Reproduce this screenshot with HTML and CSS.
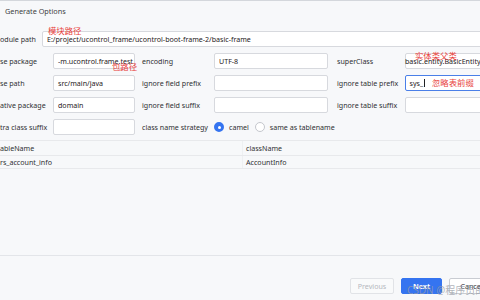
FILE: index.html
```html
<!DOCTYPE html>
<html>
<head>
<meta charset="utf-8">
<link rel="stylesheet" href="styles.css">
</head>
<body>
<div class="dialog">
  <div class="titlebar">Generate Options</div>
  <div class="module-row">
    <span class="label mod-label">odule path</span>
    <div class="field wide"><span class="val">E:/project/ucontrol_frame/ucontrol-boot-frame-2/basic-frame</span><span class="note note-module">模块路径</span></div>
  </div>
  <div class="form">
    <span class="label">se package</span>
    <div class="field"><span class="val">-m.ucontrol.frame.test</span><span class="note note-pkg">包路径</span></div>
    <span class="label c3">encoding</span>
    <div class="field"><span class="val">UTF-8</span></div>
    <span class="label c5">superClass</span>
    <div class="field"><span class="val shift">basic.entity.BasicEntity</span><span class="note note-super">实体类父类</span></div>

    <span class="label">se path</span>
    <div class="field"><span class="val">src/main/java</span></div>
    <span class="label c3">ignore field prefix</span>
    <div class="field"></div>
    <span class="label c5">ignore table prefix</span>
    <div class="field focus"><span class="val">sys_</span><span class="caret"></span><span class="note note-prefix">忽略表前缀</span></div>

    <span class="label">ative package</span>
    <div class="field"><span class="val">domain</span></div>
    <span class="label c3">ignore field suffix</span>
    <div class="field"></div>
    <span class="label c5">ignore table suffix</span>
    <div class="field"></div>

    <span class="label">tra class suffix</span>
    <div class="field"></div>
    <span class="label c3">class name strategy</span>
    <div class="radios">
      <span class="radio on"></span><span class="rtext">camel</span>
      <span class="radio off"></span><span class="rtext">same as tablename</span>
    </div>
  </div>
  <div class="table">
    <div class="trow head"><span class="cell c-left">ableName</span><span class="cell c-right">className</span></div>
    <div class="trow"><span class="cell c-left">rs_account_info</span><span class="cell c-right">AccountInfo</span></div>
  </div>
  <div class="footer">
    <span class="btn disabled">Previous</span>
    <span class="btn primary">Next</span>
    <span class="btn">Cancel</span>
    <span class="watermark">CSDN @程序员的宝库</span>
  </div>
</div>
</body>
</html>
```
FILE: styles.css
```css
html, body {
  margin: 0;
  padding: 0;
  width: 480px;
  height: 300px;
  overflow: hidden;
  background: #f7f8fa;
}
.dialog {
  width: 480px;
  height: 300px;
  box-sizing: border-box;
  border-top: 1px solid #d4d7dc;
  display: flex;
  flex-direction: column;
  font-family: "Noto Sans", "Open Sans", sans-serif;
  font-size: 7.1px;
  color: #2f3033;
  background: #f7f8fa;
  overflow: hidden;
}
.titlebar {
  height: 21px;
  line-height: 21px;
  padding-left: 5px;
  color: #3d3f43;
  font-size: 7.3px;
  flex: none;
}
.module-row {
  display: flex;
  align-items: center;
  margin-top: 9px;
  height: 16px;
  flex: none;
}
.mod-label {
  width: 42px;
  flex: none;
}
.label {
  white-space: nowrap;
  display: flex;
  align-items: center;
  height: 16px;
}
.field {
  position: relative;
  height: 16px;
  box-sizing: border-box;
  background: #ffffff;
  border: 1px solid #d7d9de;
  border-radius: 2px;
  display: flex;
  align-items: center;
  padding-left: 4px;
  white-space: nowrap;
  color: #1f2023;
}
.field.wide {
  width: 460px;
  flex: none;
}
.field .val {
  overflow: visible;
}
.field .shift {
  margin-left: -5px;
}
.field.focus {
  border: 1.5px solid #4a7fe8;
  padding-left: 3.5px;
}
.caret {
  display: inline-block;
  width: 1px;
  height: 8px;
  background: #1f2023;
  margin-left: 1px;
}
.form {
  display: grid;
  grid-template-columns: 53px 82px 79px 114px 77px 114px;
  grid-auto-rows: 16px;
  row-gap: 6px;
  margin-top: 6px;
  flex: none;
}
.form .field {
  overflow: visible;
}
.c3 {
  padding-left: 7px;
}
.c5 {
  padding-left: 9px;
}
.note {
  position: absolute;
  font-family: "Noto Sans CJK SC", sans-serif;
  font-size: 8.4px;
  line-height: 9px;
  color: #e8403a;
  white-space: nowrap;
}
.note-module {
  left: 5px;
  top: -6px;
}
.note-pkg {
  left: 58px;
  top: 8px;
}
.note-super {
  left: 9px;
  top: -3px;
}
.note-prefix {
  left: 26px;
  top: 1.5px;
}
.radios {
  grid-column: 4 / 7;
  display: flex;
  align-items: center;
  white-space: nowrap;
}
.radio {
  width: 10px;
  height: 10px;
  box-sizing: border-box;
  border-radius: 50%;
  flex: none;
}
.radio.on {
  background: #3574f0;
  border: 3px solid #3574f0;
  box-shadow: inset 0 0 0 2px #3574f0;
  position: relative;
}
.radio.on::after {
  content: "";
  position: absolute;
  left: 0.5px;
  top: 0.5px;
  width: 3px;
  height: 3px;
  border-radius: 50%;
  background: #ffffff;
}
.radio.off {
  background: #ffffff;
  border: 1px solid #c4c7cd;
  margin-left: 6px;
}
.rtext {
  margin-left: 5px;
}
.table {
  margin-top: 5px;
  flex: 1;
}
.trow {
  display: flex;
  height: 13px;
  box-sizing: border-box;
  border-bottom: 1px solid #e8e9ec;
  align-items: center;
}
.trow.head {
  height: 16px;
  border-top: 1px solid #e8e9ec;
}
.cell {
  white-space: nowrap;
}
.c-left {
  width: 242px;
  flex: none;
  box-sizing: border-box;
}
.c-right {
  padding-left: 3px;
  border-left: 1px solid #eef0f2;
  height: 100%;
  display: flex;
  align-items: center;
}
.footer {
  position: relative;
  flex: none;
  height: 45px;
  box-sizing: border-box;
  border-top: 1px solid #e3e5e9;
  padding-top: 22px;
  padding-left: 350px;
  display: flex;
  align-items: flex-start;
  gap: 7px;
  width: 520px;
}
.btn {
  height: 16px;
  box-sizing: border-box;
  border-radius: 2px;
  display: flex;
  align-items: center;
  justify-content: center;
  background: #ffffff;
  border: 1px solid #c9ccd2;
  color: #2f3033;
  width: 45px;
  flex: none;
}
.btn.disabled {
  width: 44px;
  background: #f9fafb;
  border-color: #e1e3e7;
  color: #b5b8be;
}
.btn.primary {
  width: 41px;
  background: #3574f0;
  border-color: #3574f0;
  color: #ffffff;
  font-weight: 700;
}
.watermark {
  position: absolute;
  left: 407px;
  top: 26px;
  font-family: "Noto Sans", "Noto Sans CJK SC", sans-serif;
  font-size: 10px;
  color: rgba(150, 155, 165, 0.75);
  white-space: nowrap;
}
```
